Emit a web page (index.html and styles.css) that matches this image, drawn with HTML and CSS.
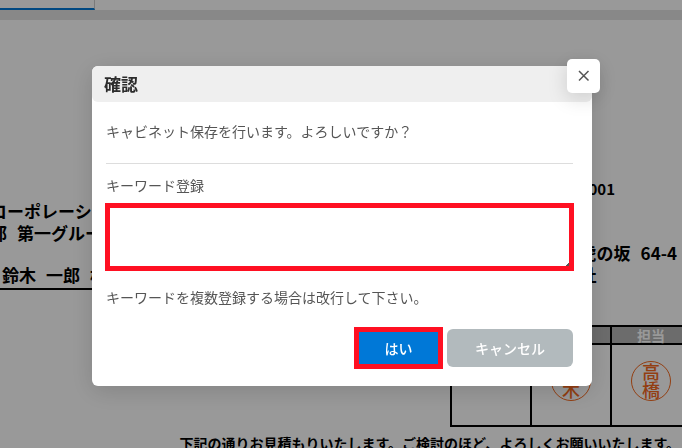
FILE: index.html
```
<!DOCTYPE html>
<html lang="ja">
<head>
<meta charset="utf-8">
<title>確認</title>
<link rel="stylesheet" href="styles.css">
</head>
<body>
<div class="tabs">
    <div class="tab active"></div>
</div>

<div class="sheet">
    <div class="parties">
        <div class="customer">
            <div class="line">コーポレーション</div>
            <div class="line"><span>部</span><span>第一グループ</span></div>
            <div class="line person"><span>鈴木</span><span>一郎</span><span>様</span></div>
        </div>
        <div class="company">
            <div class="number">0001</div>
            <div class="line"><span>虎の坂</span><span>64-4</span></div>
            <div>社</div>
        </div>
    </div>

    <table class="stamps">
        <tr><th></th><th></th><th>担当</th></tr>
        <tr>
            <td></td>
            <td><div class="stamp">鈴<br>木</div></td>
            <td><div class="stamp">高<br>橋</div></td>
        </tr>
    </table>

    <p class="greeting">下記の通りお見積もりいたします。ご検討のほど、よろしくお願いいたします。</p>
</div>

<div class="overlay">
    <div class="modal" role="dialog" aria-labelledby="title">
        <h1 id="title">確認</h1>
        <button type="button" class="close" aria-label="閉じる">
            <svg width="12" height="12" viewBox="0 0 12 12"><path d="M1 1 L10.5 10.5 M10.5 1 L1 10.5" fill="none" stroke="#555" stroke-width="1.5"/></svg>
        </button>
        <form class="content">
            <p class="message">キャビネット保存を行います。よろしいですか？</p>
            <label for="keywords">キーワード登録</label>
            <textarea id="keywords"></textarea>
            <p class="note">キーワードを複数登録する場合は改行して下さい。</p>
            <div class="buttons">
                <button type="button" class="yes">はい</button>
                <button type="button" class="cancel">キャンセル</button>
            </div>
        </form>
    </div>
</div>
</body>
</html>
```

FILE: styles.css
```
* {
    box-sizing: border-box;
    margin: 0;
    padding: 0;
}

body {
    height: 100vh;
    overflow: hidden;
    background: #fff;
    color: #000;
    font-family: "Noto Sans CJK JP", sans-serif;
}

/* tab strip */
.tabs {
    display: flex;
    height: 20px;
    border-bottom: 10px solid #e3e3e3;
}

.tab {
    width: 95px;
    border-right: 1px solid #ccc;
}

.tab.active {
    border-bottom: 2px solid #0078d7;
}

/* estimate sheet */
.sheet {
    padding-top: 158px;
    font-weight: bold;
}

.parties {
    display: flex;
    justify-content: space-between;
    height: 147px;
    font-size: 17px;
    line-height: 22px;
    white-space: nowrap;
}

.line {
    display: flex;
    gap: 10px;
}

.customer {
    width: 300px;
    margin: 22px 0 0 -10px;
}

.person {
    margin-top: 20px;
    padding-left: 12px;
    height: 26px;
    border-bottom: 2px solid #000;
}

.company {
    margin-right: 5px;
}

.number {
    margin-bottom: 42px;
    font-size: 15px;
}

.stamps {
    width: 242px;
    margin: 0 -10px 0 auto;
    border-collapse: collapse;
    table-layout: fixed;
}

.stamps th,
.stamps td {
    border: 2px solid #000;
}

.stamps th {
    height: 18px;
    background: #b4b4b4;
    color: #fff;
    font-size: 14px;
    line-height: 16px;
}

.stamps td {
    height: 82px;
    padding-bottom: 8px;
}

.stamp {
    width: 40px;
    height: 40px;
    margin: 0 auto;
    border: 1px solid #f5691e;
    border-radius: 50%;
    color: #f5691e;
    font-size: 18px;
    font-weight: 500;
    line-height: 18px;
    text-align: center;
}

.greeting {
    margin: 6px 2px 0 0;
    font-size: 14px;
    line-height: 20px;
    text-align: right;
    white-space: nowrap;
}

/* dialog */
.overlay {
    position: fixed;
    top: 0;
    right: 0;
    bottom: 0;
    left: 0;
    padding: 66px 90px 0 92px;
    background: rgba(0, 0, 0, 0.4);
}

.modal {
    position: relative;
    max-width: 500px;
    margin: 0 auto;
    background: #fff;
    border-radius: 6px;
    box-shadow: 0 5px 25px rgba(0, 0, 0, 0.15);
    color: #555;
    font-size: 14px;
    line-height: 20px;
}

.modal h1 {
    padding: 0 12px;
    background: #efefef;
    border-radius: 6px;
    color: #2c2c2c;
    font-size: 17px;
    line-height: 36px;
}

.modal button {
    border: 0;
    font-family: inherit;
    font-size: 14px;
    font-weight: 500;
    color: #fff;
}

.modal .close {
    position: absolute;
    top: -7px;
    right: -8px;
    display: flex;
    align-items: center;
    justify-content: center;
    width: 33px;
    height: 34px;
    background: #fff;
    border-radius: 5px;
    box-shadow: 0 5px 20px rgba(0, 0, 0, 0.15);
}

.content {
    padding: 19px 19px 17px 14px;
}

.message {
    padding-bottom: 22px;
    margin-bottom: 11px;
    border-bottom: 1px solid #ddd;
}

label {
    display: block;
    margin-bottom: 8px;
}

textarea {
    display: block;
    width: calc(100% + 2px);
    height: 68px;
    margin: 0 -1px 16px;
    border: 5px solid #ff1022;
    background: #fff;
    font-family: inherit;
    font-size: 14px;
    resize: vertical;
}

textarea::-webkit-resizer {
    background: linear-gradient(135deg, transparent 90%, #555 90%);
}

.buttons {
    display: flex;
    align-items: center;
    justify-content: flex-end;
    gap: 4px;
    margin-top: 20px;
}

.modal .yes {
    width: 89px;
    height: 42px;
    background: #0078d7;
    border: 5px solid #ff1022;
}

.modal .cancel {
    width: 126px;
    height: 38px;
    background: #b2babd;
    border-radius: 6px;
}
```
